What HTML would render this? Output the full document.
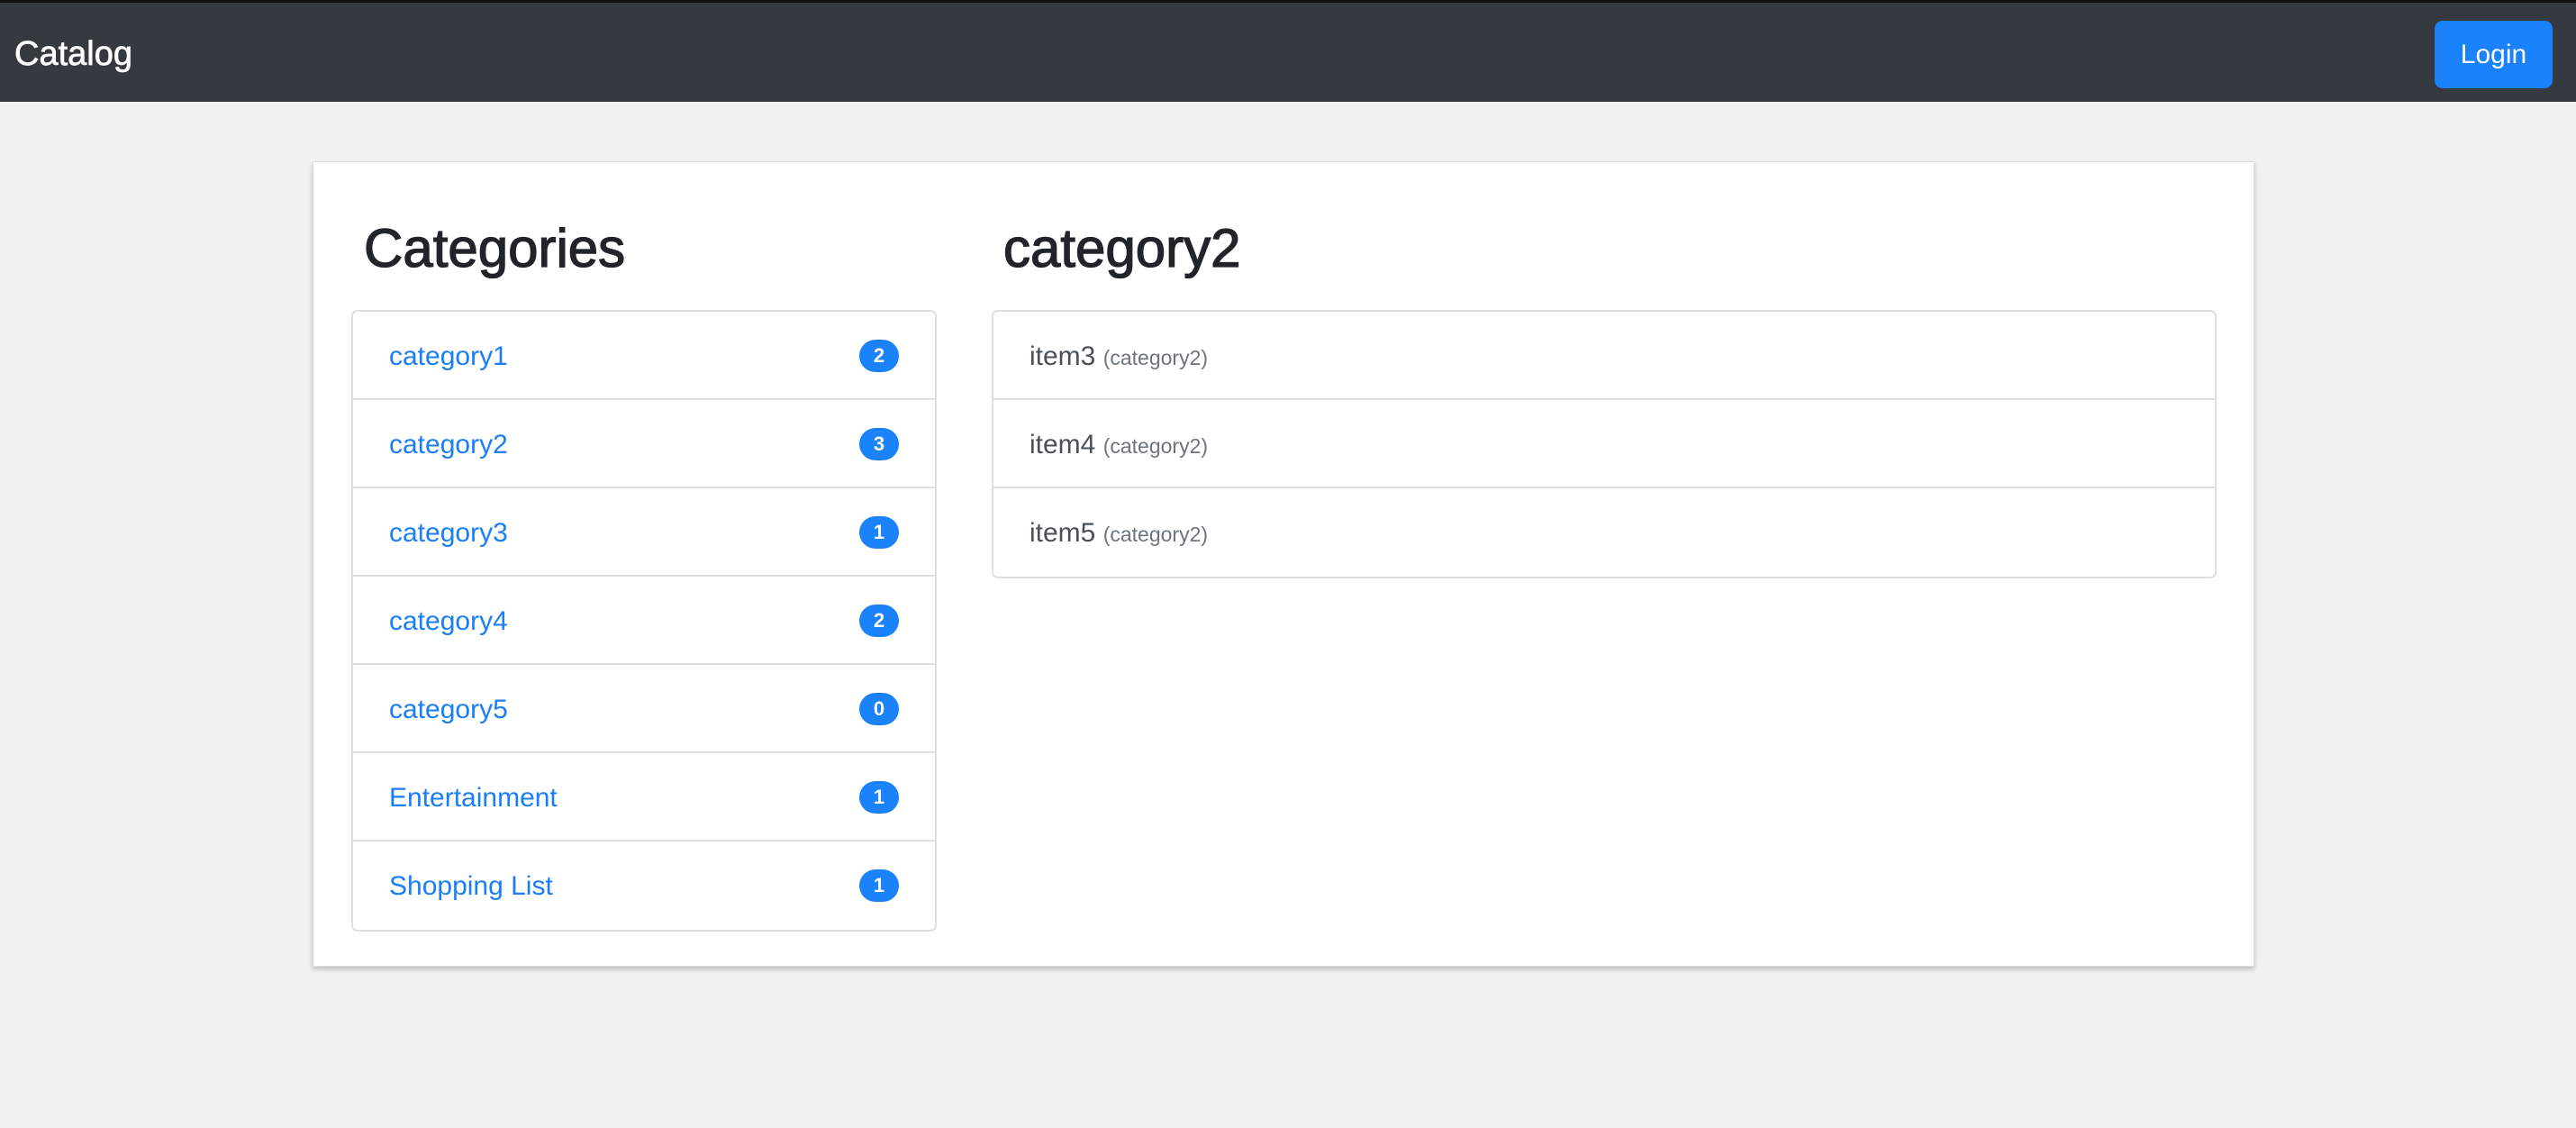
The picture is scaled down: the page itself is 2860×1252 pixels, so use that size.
<!DOCTYPE html>
<html><head><meta charset="utf-8">
<style>
*{box-sizing:border-box;margin:0;padding:0}
body{width:2860px;height:1252px;background:#f1f1f1;font-family:"Liberation Sans",Arial,sans-serif;position:relative;overflow:hidden}
.nav{position:absolute;left:0;top:0;width:2860px;height:113px;background:#343a40;border-top:3px solid #111}
.brand{position:absolute;left:16px;top:35px;font-size:38px;color:#fff;line-height:44px;-webkit-text-stroke:0.7px #fff}
.login{position:absolute;left:2703px;top:20px;width:131px;height:75px;background:#1a82fb;border-radius:9px;color:#fff;font-size:30px;line-height:75px;text-align:center}
.card{position:absolute;left:347px;top:179px;width:2156px;height:894px;background:#fff;border:1px solid #ddd;box-shadow:0 3px 5px rgba(0,0,0,.2)}
h2{position:absolute;font-weight:normal;font-size:60px;color:#212529;line-height:72px;top:240px;-webkit-text-stroke:1.3px #212529}
.list{position:absolute;border:2px solid #dfdfdf;border-radius:7px;background:#fff}
.row{height:98px;border-bottom:2px solid #dfdfdf;position:relative;padding-left:40px;line-height:100px;font-size:30px}
.row:last-child{border-bottom:none}
.l .row{color:#1a7ef6}
.badge{position:absolute;right:40px;top:31px;height:36px;min-width:44px;padding:0 10px;border-radius:18px;background:#1a82fb;color:#fff;font-weight:bold;font-size:22px;line-height:36px;text-align:center}
.r .row{color:#495057}
.r small{font-size:23px;color:#6c757d}
</style></head><body>
<div class="nav"><div class="brand">Catalog</div><div class="login">Login</div></div>
<div class="card"></div>
<h2 style="left:404px">Categories</h2>
<h2 style="left:1114px">category2</h2>
<div class="list l" style="left:390px;top:344px;width:650px">
<div class="row">category1<span class="badge">2</span></div>
<div class="row">category2<span class="badge">3</span></div>
<div class="row">category3<span class="badge">1</span></div>
<div class="row">category4<span class="badge">2</span></div>
<div class="row">category5<span class="badge">0</span></div>
<div class="row">Entertainment<span class="badge">1</span></div>
<div class="row">Shopping List<span class="badge">1</span></div>
</div>
<div class="list r" style="left:1101px;top:344px;width:1360px">
<div class="row">item3 <small>(category2)</small></div>
<div class="row">item4 <small>(category2)</small></div>
<div class="row">item5 <small>(category2)</small></div>
</div>
</body></html>
